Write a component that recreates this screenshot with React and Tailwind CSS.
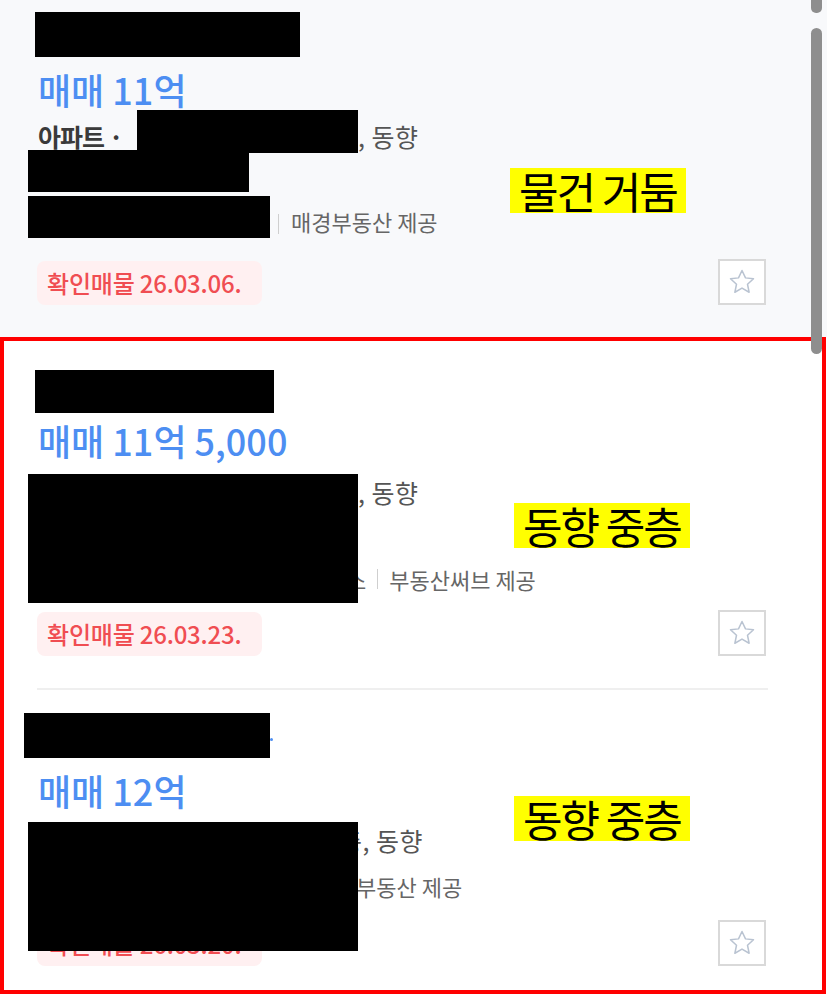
import React from "react";

const FONT = "font-['Noto_Sans_CJK_KR','Noto_Sans',sans-serif]";

function Star() {
  return (
    <div className="flex h-[46px] w-[48px] items-center justify-center border-2 border-[#d9d9d9] bg-white">
      <svg width="30" height="30" viewBox="0 0 24 24" fill="none">
        <polygon
          points="12,2.8 14.8,8.7 21.2,9.4 16.4,13.8 17.7,20.2 12,16.9 6.3,20.2 7.6,13.8 2.8,9.4 9.2,8.7"
          stroke="#b9c3d1"
          strokeWidth="1.2"
          strokeLinejoin="round"
        />
      </svg>
    </div>
  );
}

function Tag({ children }) {
  return (
    <div className="h-[44px] w-[225px] whitespace-nowrap rounded-[8px] bg-[#fff0f1] pl-[10px] text-[24px] font-medium leading-[44px] tracking-[-0.2px] text-[#f04d52]">
      {children}
    </div>
  );
}

function Highlight({ children, className }) {
  return (
    <div
      className={
        "absolute left-[510px] h-[45px] w-[176px] whitespace-nowrap bg-[#ffff00] text-center text-[43px] leading-[45px] tracking-[-2px] text-black " +
        className
      }
    >
      {children}
    </div>
  );
}

const PRICE =
  "whitespace-nowrap text-[36px] font-medium leading-[42px] tracking-[0px] text-[#4d8ef2]";

export default function App() {
  return (
    <div className={"relative h-[994px] w-[827px] overflow-hidden bg-white " + FONT}>
      {/* Card 1 */}
      <div className="relative h-[337px] bg-[#f8f9fb] pl-[28px] pt-[12px]">
        <div className="ml-[7px] h-[45px] w-[265px] bg-black" />
        <div className={"ml-[10px] h-[53px] pt-[11px] " + PRICE}>매매 11억</div>
        <div className="flex h-[43px] items-start">
          <span className="ml-[10px] mt-[10px] w-[99px] whitespace-nowrap text-[25px] font-bold leading-[32px] tracking-[-1px] text-[#3a3a3a]">
            아파트 ·
          </span>
          <div className="h-[43px] w-[221px] bg-black" />
          <span className="mt-[10px] whitespace-nowrap text-[25px] leading-[32px] tracking-[0.5px] text-[#555]">
            , 동향
          </span>
        </div>
        <div className="-mt-[3px] h-[42px] w-[221px] bg-black" />
        <div className="mt-[4px] flex items-start">
          <div className="h-[42px] w-[242px] bg-black" />
          <div className="ml-[8px] mt-[18px] h-[20px] w-px bg-[#cfcfcf]" />
          <span className="ml-[12px] mt-[12px] whitespace-nowrap text-[22px] leading-[26px] text-[#666]">
            매경부동산 제공
          </span>
        </div>
        <div className="ml-[9px] mt-[21px] flex w-[729px] items-end justify-between">
          <Tag>확인매물 26.03.06.</Tag>
          <Star />
        </div>
        <Highlight className="top-[168px]">물건 거둠</Highlight>
      </div>

      {/* Red box */}
      <div className="relative h-[657px] w-[826px] border-4 border-[#ff0000] bg-white">
        {/* Card 2 */}
        <div className="ml-[31px] mt-[29px] h-[43px] w-[239px] bg-black" />
        <div className={"ml-[34px] h-[61px] pt-[6px] " + PRICE}>매매 11억 5,000</div>
        <div className="ml-[24px] flex items-start">
          <div className="relative z-10 h-[129px] w-[330px] bg-black" />
          <div className="-ml-[12px] flex flex-col">
            <span className="mt-[3px] whitespace-nowrap pl-[12px] text-[25px] leading-[30px] tracking-[0.5px] text-[#555]">
              , 동향
            </span>
            <div className="mt-[59px] flex items-center whitespace-nowrap text-[22px] leading-[26px] text-[#666]">
              <span>소</span>
              <span className="ml-[11px] h-[20px] w-px bg-[#cfcfcf]" />
              <span className="ml-[11px]">부동산써브 제공</span>
            </div>
          </div>
        </div>
        <div className="ml-[33px] mt-[7px] flex w-[729px] items-end justify-between">
          <Tag>확인매물 26.03.23.</Tag>
          <Star />
        </div>
        <div className="ml-[33px] mt-[32px] h-[2px] w-[731px] bg-[#efefef]" />

        {/* Card 3 */}
        <div className="ml-[20px] mt-[23px] flex items-end">
          <div className="h-[45px] w-[246px] bg-black" />
          <div className="mb-[17px] h-[3px] w-[3px] rounded-full bg-[#4d8ef2]" />
        </div>
        <div className={"ml-[34px] h-[64px] pt-[11px] " + PRICE}>매매 12억</div>
        <div className="ml-[24px] flex items-start">
          <div className="relative z-10 h-[129px] w-[330px] bg-black" />
          <div className="-ml-[19px] flex flex-col">
            <span className="mt-[3px] whitespace-nowrap text-[25px] leading-[30px] tracking-[0.5px] text-[#555]">
              층, 동향
            </span>
            <span className="mt-[18px] whitespace-nowrap pl-[17px] text-[22px] leading-[26px] text-[#666]">
              부동산 제공
            </span>
          </div>
        </div>
        <div className="ml-[33px] -mt-[31px] flex w-[729px] items-end justify-between">
          <Tag>확인매물 26.03.20.</Tag>
          <Star />
        </div>

        <Highlight className="top-[162px]">동향 중층</Highlight>
        <Highlight className="top-[455px]">동향 중층</Highlight>
      </div>

      {/* Scrollbar */}
      <div className="absolute left-[811px] top-0 z-20 h-[13px] w-[11px] rounded-b-[5px] bg-[#8e8e8e]" />
      <div className="absolute left-[811px] top-[28px] z-20 h-[326px] w-[11px] rounded-[6px] bg-[#8e8e8e]" />
    </div>
  );
}
